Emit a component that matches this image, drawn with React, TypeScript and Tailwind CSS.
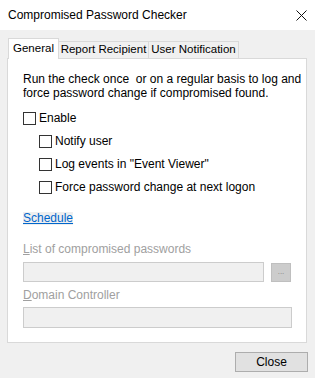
import React from 'react';

function Check({ label, indent }: { label: string; indent?: boolean }) {
  return (
    <div className={`flex items-center gap-[3px] h-[13px] whitespace-nowrap ${indent ? 'ml-[16px]' : ''}`}>
      <span className="w-[13px] h-[13px] border border-[#333333] bg-white shrink-0" />
      <span className="leading-[13px]">{label}</span>
    </div>
  );
}

export default function App() {
  return (
    <div
      className="w-[315px] h-[391px] bg-white text-[12px] text-black"
      style={{ fontFamily: '"Liberation Sans", Arial, sans-serif' }}
    >
      {/* title bar */}
      <div className="h-[30px] flex items-center justify-between pl-[8px] pr-[8px]">
        <span className="text-[12px] whitespace-nowrap">Compromised Password Checker</span>
        <svg width="11" height="11" viewBox="0 0 11 11">
          <path d="M0.5 0.5 L10.5 10.5 M10.5 0.5 L0.5 10.5" stroke="#111" strokeWidth="1" />
        </svg>
      </div>

      {/* body */}
      <div className="h-[348px] bg-[#f0f0f0] px-[7px] pt-[8px] flex flex-col">
        {/* tabs */}
        <div className="flex items-end h-[20px] pl-[1px] whitespace-nowrap text-[11.5px]">
          <div className="relative z-10 -mb-px h-[21px] w-[51px] bg-white border border-b-0 border-[#d9d9d9] flex items-center justify-center">
            General
          </div>
          <div className="h-[17px] w-[90px] border border-l-0 border-b-0 border-[#d9d9d9] flex items-center justify-center">
            Report Recipient
          </div>
          <div className="h-[17px] w-[90px] border border-l-0 border-b-0 border-[#d9d9d9] flex items-center justify-center">
            User Notification
          </div>
        </div>

        {/* panel */}
        <div className="w-[300px] h-[285px] bg-white border border-[#d9d9d9] pl-[15px] pr-[10px] flex flex-col">
          <p className="mt-[13px] leading-[14px] whitespace-nowrap">
            Run the check once&nbsp; or on a regular basis to log and
            <br />
            force password change if compromised found.
          </p>
          <div className="mt-[12px] flex flex-col gap-[10px]">
            <Check label="Enable" />
            <Check label="Notify user" indent />
            <Check label={'Log events in "Event Viewer"'} indent />
            <Check label="Force password change at next logon" indent />
          </div>
          <div className="mt-[18px] h-[13px] flex items-center">
            <a className="text-[#0066cc] underline bg-[#efefef] leading-[13px]">Schedule</a>
          </div>
          <div className="mt-[17px] text-[#a0a0a0] leading-[14px]">
            <span className="underline">L</span>ist of compromised passwords
          </div>
          <div className="mt-[6px] flex items-center">
            <div className="w-[241px] h-[20px] border border-[#cccccc] bg-[#f0f0f0]" />
            <div className="ml-[7px] w-[20px] h-[19px] bg-[#cccccc] border border-[#bfbfbf] flex items-center justify-center text-[8px] text-[#838383]">
              ...
            </div>
          </div>
          <div className="mt-[6px] text-[#a0a0a0] leading-[14px]">
            <span className="underline">D</span>omain Controller
          </div>
          <div className="mt-[5px] w-[269px] h-[21px] border border-[#cccccc] bg-[#f0f0f0]" />
        </div>

        {/* footer */}
        <div className="flex justify-end mt-[9px]">
          <button className="w-[73px] h-[20px] bg-[#e1e1e1] border border-[#adadad] text-[12px] leading-[18px]">
            Close
          </button>
        </div>
      </div>
    </div>
  );
}
